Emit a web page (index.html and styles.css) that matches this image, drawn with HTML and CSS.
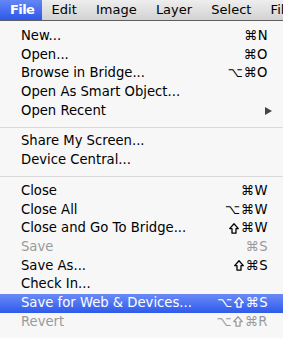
FILE: index.html
```html
<!DOCTYPE html>
<html>
<head>
<meta charset="utf-8">
<link rel="stylesheet" href="styles.css">
</head>
<body>
<div class="menubar">
  <span class="mb-item mb-active">File</span>
  <span class="mb-item">Edit</span>
  <span class="mb-item">Image</span>
  <span class="mb-item">Layer</span>
  <span class="mb-item">Select</span>
  <span class="mb-item">Filter</span>
</div>
<div class="menu">
  <div class="row"><span>New...</span><span class="key">⌘N</span></div>
  <div class="row"><span>Open...</span><span class="key">⌘O</span></div>
  <div class="row"><span>Browse in Bridge...</span><span class="key">⌥⌘O</span></div>
  <div class="row"><span>Open As Smart Object...</span></div>
  <div class="row"><span>Open Recent</span><span class="arrow"></span></div>
  <div class="sep"></div>
  <div class="row"><span>Share My Screen...</span></div>
  <div class="row"><span>Device Central...</span></div>
  <div class="sep sep2"></div>
  <div class="row"><span>Close</span><span class="key">⌘W</span></div>
  <div class="row"><span>Close All</span><span class="key">⌥⌘W</span></div>
  <div class="row"><span>Close and Go To Bridge...</span><span class="key"><svg class="shift" viewBox="0 0 10 11"><path d="M5 0.8 L9.3 5.6 H7 V10.2 H3 V5.6 H0.7 Z"/></svg>⌘W</span></div>
  <div class="row disabled"><span>Save</span><span class="key">⌘S</span></div>
  <div class="row"><span>Save As...</span><span class="key"><svg class="shift" viewBox="0 0 10 11"><path d="M5 0.8 L9.3 5.6 H7 V10.2 H3 V5.6 H0.7 Z"/></svg>⌘S</span></div>
  <div class="row"><span>Check In...</span></div>
  <div class="row selected"><span>Save for Web &amp; Devices...</span><span class="key">⌥<svg class="shift" viewBox="0 0 10 11"><path d="M5 0.8 L9.3 5.6 H7 V10.2 H3 V5.6 H0.7 Z"/></svg>⌘S</span></div>
  <div class="row disabled"><span>Revert</span><span class="key">⌥<svg class="shift" viewBox="0 0 10 11"><path d="M5 0.8 L9.3 5.6 H7 V10.2 H3 V5.6 H0.7 Z"/></svg>⌘R</span></div>
</div>
</body>
</html>
```
FILE: styles.css
```css
html, body {
  margin: 0;
  padding: 0;
  width: 283px;
  height: 338px;
  overflow: hidden;
  background: #f7f7f7;
  font-family: "DejaVu Sans", "Liberation Sans", sans-serif;
  font-size: 13.2px;
  color: #000;
}
.menubar {
  display: flex;
  height: 20px;
  line-height: 20px;
  font-size: 13px;
  background: linear-gradient(#eeeeee, #d2d2d2);
  border-bottom: 1px solid #5e5e5e;
  white-space: nowrap;
  overflow: hidden;
}
.mb-item {
  padding: 0 9.6px;
  flex: none;
}
.mb-active {
  width: 22px;
  padding: 0 10px;
  font-weight: bold;
  letter-spacing: -0.6px;
  color: #fff;
  background: linear-gradient(#6486f5, #2c58ea);
}
.menu {
  padding-top: 6px;
}
.row {
  display: flex;
  justify-content: space-between;
  align-items: center;
  height: 18.7px;
  line-height: 18.7px;
  padding: 0 15px 0 21px;
  white-space: nowrap;
}
.key {
  display: flex;
  align-items: center;
  letter-spacing: 0.5px;
}
.shift {
  width: 10px;
  height: 11px;
  margin: 0 1.5px 1px 1px;
  fill: none;
  stroke: currentColor;
  stroke-width: 1.3;
  stroke-linejoin: round;
}
.disabled {
  color: #9a9a9a;
}
.selected {
  color: #fff;
  background: linear-gradient(#6a8bf6, #2e5aeb);
}
.arrow {
  width: 0;
  height: 0;
  margin-right: -4px;
  border-top: 4px solid transparent;
  border-bottom: 4px solid transparent;
  border-left: 7px solid #444;
}
.sep {
  height: 12px;
  box-sizing: border-box;
  padding-top: 7px;
}
.sep::before {
  content: "";
  display: block;
  height: 1px;
  background: #d9d9d9;
}
.sep2 {
  padding-top: 6px;
}
```
